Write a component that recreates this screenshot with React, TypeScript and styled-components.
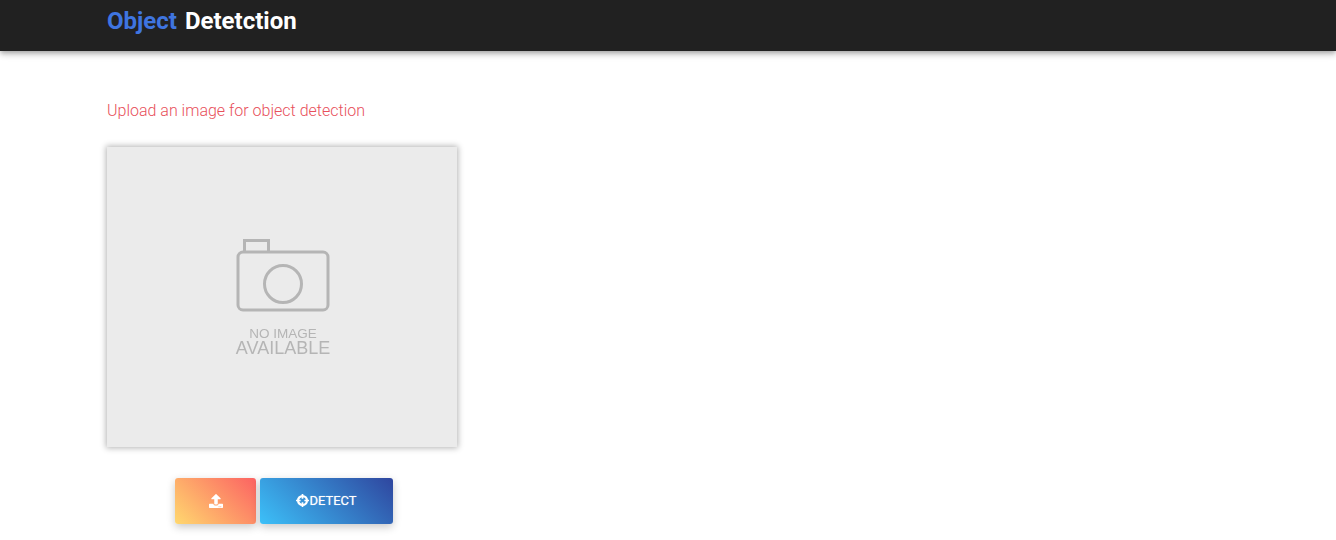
import { createGlobalStyle } from 'styled-components'
import styled from 'styled-components'
import { FaUpload } from 'react-icons/fa'

const GlobalStyle = createGlobalStyle`
  html, body {
    margin: 0;
    padding: 0;
    background: #fff;
    font-family: Roboto, "Liberation Sans", sans-serif;
  }
`

const Page = styled.div`
  width: 1336px;
  height: 540px;
  overflow: hidden;
`

const Header = styled.header`
  height: 51px;
  padding-left: 107px;
  background: #212121;
  box-shadow: 0 2px 4px -1px rgba(0, 0, 0, 0.2), 0 4px 5px 0 rgba(0, 0, 0, 0.14), 0 1px 10px 0 rgba(0, 0, 0, 0.12);
`

const Title = styled.h1`
  display: flex;
  gap: 8px;
  margin: 0;
  padding-top: 7px;
  font-size: 24px;
  line-height: 28px;
  font-weight: 700;
  color: #fff;
`

const Accent = styled.span`
  color: #3f75e0;
`

const Main = styled.main`
  width: 350px;
  padding: 50px 0 0 107px;
`

const Hint = styled.p`
  margin: 0 0 26px;
  font-size: 16px;
  line-height: 20px;
  font-weight: 300;
  color: #e8505b;
`

const Preview = styled.div`
  display: flex;
  flex-direction: column;
  align-items: center;
  height: 300px;
  padding-top: 90px;
  box-sizing: border-box;
  background: #ebebeb;
  box-shadow: 0 0 6px 1px rgba(0, 0, 0, 0.3);
`

const Placeholder = styled.div`
  display: flex;
  flex-direction: column;
  align-items: center;
  margin-left: 2px;
  color: #b5b5b5;
  filter: blur(0.6px);
  font-family: "Liberation Sans", Arial, sans-serif;
`

const NoImage = styled.span`
  margin-top: 15px;
  font-size: 13.5px;
  line-height: 13px;
`

const Available = styled.span`
  font-size: 18px;
  line-height: 16px;
`

const Actions = styled.div`
  display: flex;
  justify-content: center;
  gap: 4px;
  margin: 31px 0 0 3px;
`

const ActionButton = styled.button<{ $from: string; $to: string; $width: number }>`
  display: flex;
  align-items: center;
  justify-content: center;
  width: ${(props) => props.$width}px;
  height: 46px;
  padding: 0;
  border: 0;
  border-radius: 3px;
  background: linear-gradient(45deg, ${(props) => props.$from}, ${(props) => props.$to});
  box-shadow: 0 3px 8px rgba(0, 0, 0, 0.22);
  color: #fff;
  font-family: Roboto, sans-serif;
  font-size: 13px;
  font-weight: 400;
  cursor: pointer;
`

const UploadIcon = styled(FaUpload)`
  margin: -1px 0 0 1px;
`

const CrosshairSvg = styled.svg`
  margin: -1px 0 0 1px;
`

const DetectLabel = styled.span`
  margin-top: -1px;
  text-shadow: 0 0 1px rgba(255, 255, 255, 0.6);
`

const CrosshairIcon = () => (
  <CrosshairSvg width="13" height="13" viewBox="0 0 14 14" fill="none" stroke="currentColor" strokeWidth="2.4">
    <circle cx="7" cy="7" r="4.8" />
    <path d="M7 0v5M7 9V14M0 7h5M9 7H14" strokeWidth="1.8" />
  </CrosshairSvg>
)

const App = () => {
  return (
    <Page>
      <GlobalStyle />
      <Header>
        <Title>
          <Accent>Object</Accent>
          <span>Detetction</span>
        </Title>
      </Header>
      <Main>
        <Hint>Upload an image for object detection</Hint>
        <Preview>
          <Placeholder>
            <svg width="96" height="75" viewBox="0 0 96 75" fill="none" stroke="currentColor" strokeWidth="3">
              <path d="M9.5 15V3.5h24V15" />
              <rect x="3" y="15" width="90" height="58" rx="5" />
              <circle cx="48" cy="47" r="18.5" />
            </svg>
            <NoImage>NO IMAGE</NoImage>
            <Available>AVAILABLE</Available>
          </Placeholder>
        </Preview>
        <Actions>
          <ActionButton $from="#ffd86f" $to="#fc6262" $width={81}>
            <UploadIcon size={14} />
          </ActionButton>
          <ActionButton $from="#3cc0f8" $to="#2f469f" $width={133}>
            <CrosshairIcon />
            <DetectLabel>DETECT</DetectLabel>
          </ActionButton>
        </Actions>
      </Main>
    </Page>
  )
}

export default App
